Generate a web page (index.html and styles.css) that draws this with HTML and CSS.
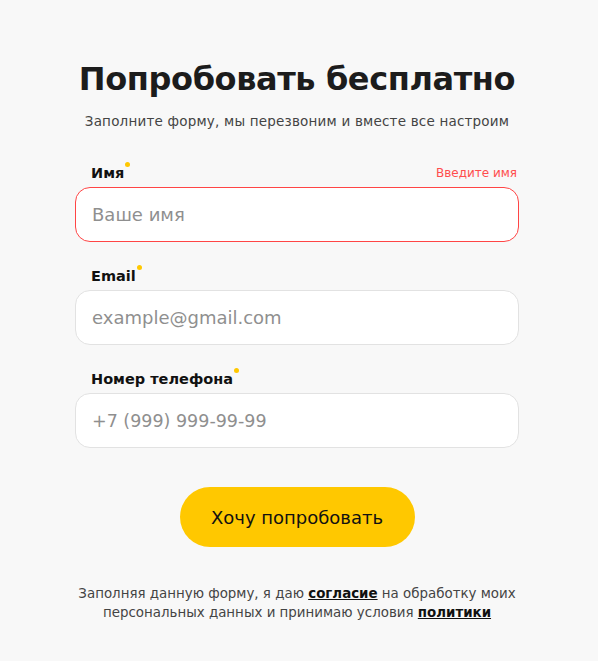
FILE: index.html
```html
<!DOCTYPE html>
<html lang="ru">
<head>
<meta charset="utf-8">
<link rel="stylesheet" href="styles.css">
</head>
<body>
<main class="page">
  <h1 class="title">Попробовать бесплатно</h1>
  <p class="subtitle">Заполните форму, мы перезвоним и вместе все настроим</p>
  <form class="form">
    <div class="field">
      <div class="label-row">
        <label class="label">Имя<span class="dot"></span></label>
        <span class="error">Введите имя</span>
      </div>
      <input class="input input-error" type="text" placeholder="Ваше имя">
    </div>
    <div class="field">
      <div class="label-row">
        <label class="label">Email<span class="dot"></span></label>
      </div>
      <input class="input" type="text" placeholder="example@gmail.com">
    </div>
    <div class="field">
      <div class="label-row">
        <label class="label">Номер телефона<span class="dot"></span></label>
      </div>
      <input class="input input-phone" type="text" placeholder="+7 (999) 999-99-99">
    </div>
    <div class="actions">
      <button class="btn" type="button">Хочу попробовать</button>
    </div>
    <p class="note">Заполняя данную форму, я даю <a href="#">согласие</a> на обработку моих персональных данных и принимаю условия <a href="#">политики</a></p>
  </form>
</main>
</body>
</html>
```
FILE: styles.css
```css
html, body {
  margin: 0;
  padding: 0;
  background: #f8f8f8;
}
body {
  font-family: "DejaVu Sans", "Noto Sans", sans-serif;
  color: #1a1a1a;
  padding-right: 4px;
}
.page {
  width: 444px;
  margin: 0 auto;
  padding-top: 58px;
  display: flex;
  flex-direction: column;
  align-items: center;
}
.title {
  margin: 0;
  font-size: 32px;
  font-weight: 600;
  line-height: 42px;
  color: #1c1c1c;
  letter-spacing: -0.4px;
  white-space: nowrap;
}
.subtitle {
  margin: 12px 0 0;
  font-size: 13.5px;
  letter-spacing: 0.2px;
  line-height: 18px;
  color: #444;
  white-space: nowrap;
}
.form {
  width: 444px;
  margin-top: 33px;
  display: flex;
  flex-direction: column;
}
.field {
  display: flex;
  flex-direction: column;
  margin-bottom: 24px;
}
.label-row {
  display: flex;
  justify-content: space-between;
  align-items: flex-end;
  padding: 0 2px 0 16px;
  height: 20px;
  margin-bottom: 4px;
}
.label {
  position: relative;
  font-size: 14.5px;
  font-weight: 600;
  line-height: 20px;
  color: #111;
}
.dot {
  position: absolute;
  right: -6px;
  top: -1px;
  width: 5px;
  height: 5px;
  border-radius: 50%;
  background: #ffc800;
}
.error {
  font-size: 12px;
  line-height: 20px;
  color: #ff4d4d;
}
.input {
  box-sizing: border-box;
  width: 100%;
  height: 55px;
  border: 1px solid #e2e2e2;
  border-radius: 15px;
  background: #fff;
  padding: 0 16px;
  font-family: inherit;
  font-size: 18px;
  color: #222;
  outline: none;
}
.input-phone {
  font-size: 17.5px;
}
.input::placeholder {
  color: #8f8f8f;
}
.input-error {
  border-color: #ff4545;
}
.actions {
  display: flex;
  justify-content: center;
  margin-top: 15px;
}
.btn {
  width: 235px;
  height: 60px;
  border: none;
  border-radius: 30px;
  background: #ffc800;
  font-family: inherit;
  font-size: 18px;
  font-weight: 500;
  color: #111;
  cursor: pointer;
}
.note {
  margin: 37px 0 0;
  text-align: center;
  font-size: 13.4px;
  line-height: 19px;
  color: #444;
}
.note a {
  color: #111;
  font-weight: 700;
  text-decoration: underline;
}
```
